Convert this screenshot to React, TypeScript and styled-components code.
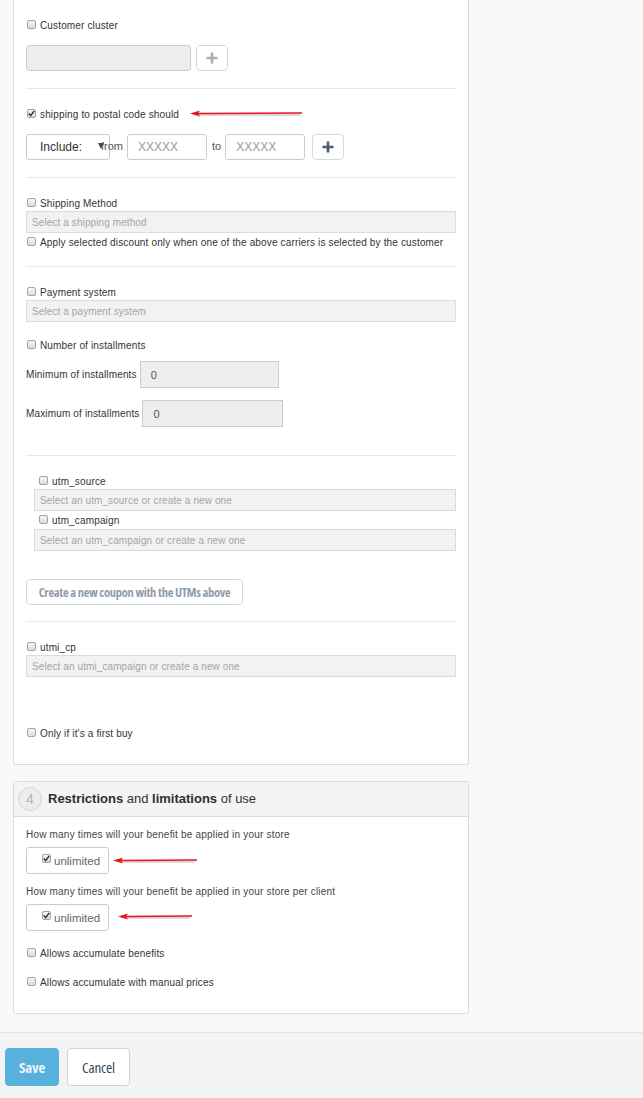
import React from "react";
import styled, { createGlobalStyle } from "styled-components";

const Global = createGlobalStyle`
  html, body { margin: 0; padding: 0; background: #f9f9f9; }
  body { font-family: "Liberation Sans", Arial, sans-serif; font-size: 10px; color: #333; }
  * { box-sizing: border-box; }
`;

const condensed = `"Open Sans", "Liberation Sans", sans-serif`;

const Page = styled.div`
  width: 643px;
  min-height: 1098px;
  display: flex;
  flex-direction: column;
  background: #f9f9f9;
`;

const Content = styled.div`
  padding: 0 0 18px 13px;
  display: flex;
  flex-direction: column;
  gap: 16px;
`;

const Panel = styled.section<{ $open?: boolean }>`
  width: 456px;
  background: #fff;
  border: 1px solid #dcdcdc;
  border-radius: 3px;
  ${(p) => (p.$open ? "border-top: none; border-top-left-radius: 0; border-top-right-radius: 0;" : "")}
  display: flex;
  flex-direction: column;
`;

const PanelBody = styled.div<{ $pt: number; $pb: number }>`
  padding: ${(p) => p.$pt}px 12px ${(p) => p.$pb}px 12px;
  display: flex;
  flex-direction: column;
`;

const Block = styled.div<{ $ml?: number }>`
  margin-left: ${(p) => p.$ml ?? 0}px;
`;

const Divider = styled.hr<{ $mt: number }>`
  margin: ${(p) => p.$mt}px 0 0 0;
  border: none;
  border-top: 1px solid #e8e8e8;
  height: 0;
`;

const CheckRow = styled.label<{ $mt?: number; $indent?: number }>`
  display: flex;
  align-items: center;
  gap: 4px;
  height: 14px;
  padding-top: 2px;
  line-height: 12px;
  margin-top: ${(p) => p.$mt ?? 0}px;
  margin-left: ${(p) => p.$indent ?? 0}px;
  font-size: 10px;
  letter-spacing: 0.15px;
  color: #333;
  position: relative;
  white-space: nowrap;
`;

const Box = styled.span`
  width: 9px;
  height: 9px;
  flex: none;
  margin-left: 1px;
  border: 1px solid #a3a3a3;
  border-radius: 2px;
  background: linear-gradient(#f6f6f6, #dcdcdc);
  display: inline-flex;
  align-items: center;
  justify-content: center;
  margin-top: -4px;
`;

const Check = ({ checked }: { checked?: boolean }) => (
  <Box>
    {checked && (
      <svg width="7" height="7" viewBox="0 0 7 7">
        <path d="M0.8 3.6 L2.7 5.6 L6.2 0.9" fill="none" stroke="#333" strokeWidth="1.5" />
      </svg>
    )}
  </Box>
);

const Row = styled.div<{ $mt?: number; $gap?: number }>`
  display: flex;
  align-items: center;
  gap: ${(p) => p.$gap ?? 6}px;
  margin-top: ${(p) => p.$mt ?? 0}px;
  position: relative;
`;

const GrayInput = styled.div<{ $w: number; $h?: number }>`
  width: ${(p) => p.$w}px;
  height: ${(p) => p.$h ?? 26}px;
  background: #eee;
  border: 1px solid #ccc;
  border-radius: 3px;
  display: flex;
  align-items: center;
  padding-left: 10px;
  font-size: 12px;
  color: #555;
`;

const NumInput = styled(GrayInput)`
  border-radius: 0;
  font-size: 11px;
  color: #555;
`;

const PlusButton = styled.button<{ $dark?: boolean }>`
  width: 32px;
  height: 26px;
  background: #fff;
  border: 1px solid #d5d9de;
  border-radius: 4px;
  display: flex;
  align-items: center;
  justify-content: center;
  padding: 0;
  color: ${(p) => (p.$dark ? "#4e5d6c" : "#a3adb8")};
`;

const Plus = () => (
  <svg width="12" height="12" viewBox="0 0 12 12">
    <path d="M6 0.5 V11.5 M0.5 6 H11.5" stroke="currentColor" strokeWidth="2.6" />
  </svg>
);

const TextInput = styled.div<{ $w: number }>`
  width: ${(p) => p.$w}px;
  height: 26px;
  border: 1px solid #ccc;
  border-radius: 3px;
  background: #fff;
  display: flex;
  align-items: center;
  padding-left: 10px;
  font-size: 12px;
  color: #9a9a9a;
`;

const SelectBox = styled.div`
  width: 84px;
  height: 26px;
  border: 1px solid #ccc;
  border-radius: 3px;
  background: #fff;
  display: flex;
  align-items: center;
  padding-left: 13px;
  font-size: 12px;
  color: #333;
  position: relative;
`;

const Caret = styled.span`
  position: absolute;
  right: 5px;
  top: 8px;
  width: 0;
  height: 0;
  border-left: 3.5px solid transparent;
  border-right: 3.5px solid transparent;
  border-top: 6px solid #444;
`;

const SmallLabel = styled.span<{ $ml?: number }>`
  position: relative;
  z-index: 1;
  font-size: 11px;
  color: #555;
  margin-left: ${(p) => p.$ml ?? 0}px;
  margin-top: -2px;
`;

const Picker = styled.div<{ $mt?: number; $indent?: number }>`
  height: 22px;
  margin-top: ${(p) => p.$mt ?? 0}px;
  margin-left: ${(p) => p.$indent ?? 0}px;
  background: #f2f2f2;
  border: 1px solid #dcdcdc;
  display: flex;
  align-items: center;
  padding-left: 5px;
  font-size: 10px;
  letter-spacing: 0.1px;
  color: #a5a5a5;
`;

const FieldLabel = styled.span`
  font-size: 10px;
  letter-spacing: 0.15px;
  color: #333;
`;

const OutlineButton = styled.button<{ $mt?: number }>`
  align-self: flex-start;
  margin-top: ${(p) => p.$mt ?? 0}px;
  width: 217px;
  height: 26px;
  padding: 0;
  background: #fff;
  border: 1px solid #d5d9de;
  border-radius: 4px;
  font-family: ${condensed};
  font-stretch: 75%;
  font-weight: 700;
  font-size: 12.5px;
  letter-spacing: -0.3px;
  color: #8f9cab;
  white-space: nowrap;
`;

const PanelHeader = styled.header`
  height: 35px;
  background: #f4f4f4;
  border-bottom: 1px solid #dcdcdc;
  border-radius: 3px 3px 0 0;
  display: flex;
  align-items: center;
  padding-left: 4px;
  gap: 6px;
`;

const StepCircle = styled.span`
  width: 24px;
  height: 24px;
  border-radius: 50%;
  border: 1px solid #d4d4d4;
  background: #ededed;
  color: #b3b3b3;
  font-size: 14px;
  display: flex;
  align-items: center;
  justify-content: center;
`;

const Title = styled.h2`
  margin: 0 0 1px 0;
  font-size: 13px;
  font-weight: 400;
  color: #333;
  b { font-weight: 700; color: #2f2f2f; }
`;

const Question = styled.div<{ $mt?: number }>`
  margin-top: ${(p) => p.$mt ?? 0}px;
  font-size: 10px;
  line-height: 12px;
  color: #444;
  letter-spacing: 0.2px;
`;

const UnlimitedBox = styled.label<{ $mt?: number }>`
  margin-top: ${(p) => p.$mt ?? 0}px;
  width: 83px;
  height: 27px;
  border: 1px solid #ccc;
  border-radius: 3px;
  display: flex;
  align-items: center;
  gap: 3px;
  padding-left: 14px;
  font-size: 11.5px;
  color: #666;
  position: relative;
`;

const ArrowWrap = styled.span<{ $left: number; $top: number; $w: number }>`
  position: absolute;
  left: ${(p) => p.$left}px;
  top: ${(p) => p.$top}px;
  width: ${(p) => p.$w}px;
  height: 10px;
  pointer-events: none;
`;

const Arrow = ({ left, top, w }: { left: number; top: number; w: number }) => (
  <ArrowWrap $left={left} $top={top} $w={w}>
    <svg width={w} height="10" viewBox={`0 0 ${w} 10`}>
      <path d={`M9 6 L${w - 2} 6`} stroke="rgba(0,0,0,0.15)" strokeWidth="2" />
      <path d={`M8 4.5 L${w} 4`} stroke="#e8131a" strokeWidth="1.6" />
      <path d="M0 4.5 L10 1.5 L8 4.5 L10 7.5 Z" fill="#e8131a" />
    </svg>
  </ArrowWrap>
);

const Footer = styled.footer`
  flex: 1;
  border-top: 1px solid #e2e2e2;
  background: #f4f4f4;
  padding: 15px 0 0 5px;
  display: flex;
  gap: 8px;
  align-items: flex-start;
`;

const FooterButton = styled.button<{ $primary?: boolean; $w: number }>`
  width: ${(p) => p.$w}px;
  height: 38px;
  padding: 0;
  border-radius: 4px;
  border: 1px solid ${(p) => (p.$primary ? "#58b0dc" : "#cfd3d8")};
  background: ${(p) => (p.$primary ? "#58b0dc" : "#fff")};
  color: ${(p) => (p.$primary ? "#eaf5fb" : "#3d4650")};
  font-family: ${condensed};
  font-stretch: 75%;
  font-weight: ${(p) => (p.$primary ? 700 : 400)};
  font-size: 15px;
  letter-spacing: -0.2px;
`;

export default function App() {
  return (
    <Page>
      <Global />
      <Content>
        <Panel $open>
          <PanelBody $pt={18} $pb={24}>
            <CheckRow>
              <Check /> Customer cluster
            </CheckRow>
            <Row $mt={13} $gap={5}>
              <GrayInput $w={165} />
              <PlusButton>
                <Plus />
              </PlusButton>
            </Row>
            <Divider $mt={17} />

            <CheckRow $mt={18}>
              <Check checked /> shipping to postal code should
              <Arrow left={164} top={2} w={112} />
            </CheckRow>
            <Row $mt={13} $gap={4}>
              <SelectBox>
                Include:
                <Caret />
              </SelectBox>
              <SmallLabel $ml={-13}>from</SmallLabel>
              <TextInput $w={80}>XXXXX</TextInput>
              <SmallLabel $ml={1}>to</SmallLabel>
              <TextInput $w={80}>XXXXX</TextInput>
              <Block $ml={3}>
                <PlusButton $dark>
                  <Plus />
                </PlusButton>
              </Block>
            </Row>
            <Divider $mt={17} />

            <CheckRow $mt={18}>
              <Check /> Shipping Method
            </CheckRow>
            <Picker $mt={1}>Select a shipping method</Picker>
            <CheckRow $mt={2}>
              <Check /> Apply selected discount only when one of the above carriers is selected by the customer
            </CheckRow>
            <Divider $mt={17} />

            <CheckRow $mt={18}>
              <Check /> Payment system
            </CheckRow>
            <Picker $mt={1}>Select a payment system</Picker>
            <CheckRow $mt={16}>
              <Check /> Number of installments
            </CheckRow>
            <Row $mt={9} $gap={3}>
              <FieldLabel>Minimum of installments</FieldLabel>
              <NumInput $w={139} $h={27}>0</NumInput>
            </Row>
            <Row $mt={12} $gap={3}>
              <FieldLabel>Maximum of installments</FieldLabel>
              <NumInput $w={141} $h={27}>0</NumInput>
            </Row>
            <Divider $mt={28} />

            <CheckRow $mt={18} $indent={12}>
              <Check /> utm_source
            </CheckRow>
            <Picker $mt={1} $indent={8}>Select an utm_source or create a new one</Picker>
            <CheckRow $mt={2} $indent={12}>
              <Check /> utm_campaign
            </CheckRow>
            <Picker $mt={2} $indent={8}>Select an utm_campaign or create a new one</Picker>
            <OutlineButton $mt={28}>Create a new coupon with the UTMs above</OutlineButton>
            <Divider $mt={16} />

            <CheckRow $mt={18}>
              <Check /> utmi_cp
            </CheckRow>
            <Picker $mt={1}>Select an utmi_campaign or create a new one</Picker>
            <CheckRow $mt={49}>
              <Check /> Only if it's a first buy
            </CheckRow>
          </PanelBody>
        </Panel>

        <Panel>
          <PanelHeader>
            <StepCircle>4</StepCircle>
            <Title>
              <b>Restrictions</b> and <b>limitations</b> of use
            </Title>
          </PanelHeader>
          <PanelBody $pt={12} $pb={24}>
            <Question>How many times will your benefit be applied in your store</Question>
            <UnlimitedBox $mt={6}>
              <Check checked /> unlimited
              <Arrow left={86} top={8} w={84} />
            </UnlimitedBox>
            <Question $mt={12}>How many times will your benefit be applied in your store per client</Question>
            <UnlimitedBox $mt={6}>
              <Check checked /> unlimited
              <Arrow left={91} top={7} w={74} />
            </UnlimitedBox>
            <CheckRow $mt={15}>
              <Check /> Allows accumulate benefits
            </CheckRow>
            <CheckRow $mt={15}>
              <Check /> Allows accumulate with manual prices
            </CheckRow>
          </PanelBody>
        </Panel>
      </Content>
      <Footer>
        <FooterButton $primary $w={54}>Save</FooterButton>
        <FooterButton $w={63}>Cancel</FooterButton>
      </Footer>
    </Page>
  );
}
